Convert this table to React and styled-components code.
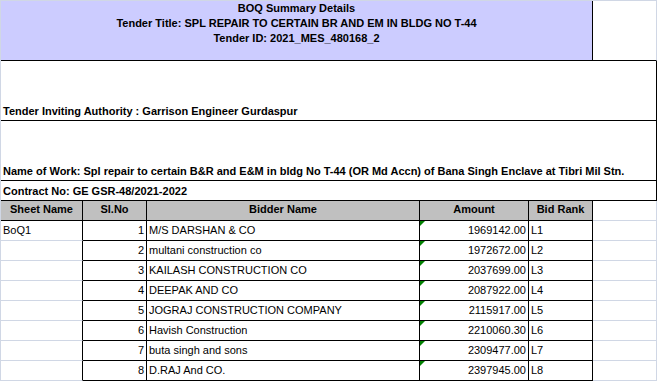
import React from "react";
import styled, { createGlobalStyle, css } from "styled-components";

const GRID = "#d0d7e5";
const BLACK = "#000";

const Global = createGlobalStyle`
  html, body { margin: 0; padding: 0; background: #fff; }
  body { font-family: "Liberation Sans", Arial, sans-serif; color: #000; }
`;

const Sheet = styled.div`
  display: grid;
  grid-template-columns: 82px 64px 273px 109px 64px 64px;
  grid-template-rows: 60px 60px 60px 20px 20px repeat(8, 20px);
  width: 657px;
  box-sizing: border-box;
  border-left: 1px solid ${GRID};
  border-top: 1px solid ${GRID};
`;

const Cell = styled.div`
  box-sizing: border-box;
  position: relative;
  display: flex;
  align-items: flex-end;
  overflow: hidden;
  white-space: nowrap;
  font-size: 11px;
  line-height: 13px;
  padding: 0 2px 2px;
  border-right: 1px solid ${(p) => (p.$rb === "black" ? BLACK : GRID)};
  border-bottom: 1px solid ${(p) => (p.$bb === "black" ? BLACK : GRID)};
  background: ${(p) => p.$bg || "#fff"};
  justify-content: ${(p) =>
    p.$align === "right" ? "flex-end" : p.$align === "center" ? "center" : "flex-start"};
  ${(p) => p.$span && css`grid-column: span ${p.$span};`}
  ${(p) => p.$bold && css`font-weight: bold;`}
`;

const TitleCell = styled(Cell)`
  flex-direction: column;
  align-items: center;
  justify-content: flex-start;
  padding: 0;
  font-weight: bold;
  line-height: 15px;
`;

const InfoCell = styled(Cell)`
  font-weight: bold;
  padding-bottom: 2px;
`;

const HeaderCell = styled(Cell)`
  font-weight: bold;
  justify-content: center;
  align-items: center;
  padding-bottom: 2px;
`;

const DataCell = styled(Cell)`
  align-items: center;
  padding-bottom: 1px;
  ${(p) =>
    p.$flag &&
    css`
      &::before {
        content: "";
        position: absolute;
        top: 0;
        left: 0;
        width: 0;
        height: 0;
        border-top: 5px solid #008000;
        border-right: 5px solid transparent;
      }
    `}
`;

const bidders = [
  ["1", "M/S DARSHAN & CO", "1969142.00", "L1"],
  ["2", "multani construction co", "1972672.00", "L2"],
  ["3", "KAILASH CONSTRUCTION CO", "2037699.00", "L3"],
  ["4", "DEEPAK AND CO", "2087922.00", "L4"],
  ["5", "JOGRAJ CONSTRUCTION COMPANY", "2115917.00", "L5"],
  ["6", "Havish Construction", "2210060.30", "L6"],
  ["7", "buta singh and sons", "2309477.00", "L7"],
  ["8", "D.RAJ And CO.", "2397945.00", "L8"],
];

export default function App() {
  return (
    <>
      <Global />
      <Sheet>
        <TitleCell $span={5} $bg="#ccccff" $rb="black" $bb="black">
          <span>BOQ Summary Details</span>
          <span>Tender Title: SPL REPAIR TO CERTAIN BR AND EM IN BLDG NO T-44</span>
          <span>Tender ID: 2021_MES_480168_2</span>
        </TitleCell>
        <Cell $bb="black" />

        <InfoCell $span={6} $rb="black" $bb="black">
          Tender Inviting Authority : Garrison Engineer Gurdaspur
        </InfoCell>
        <InfoCell $span={6} $rb="black" $bb="black">
          Name of Work: Spl repair to certain B&amp;R and E&amp;M in bldg No T-44 (OR Md Accn) of Bana Singh Enclave at Tibri Mil Stn.
        </InfoCell>
        <InfoCell $span={6} $rb="black" $bb="black">
          Contract No: GE GSR-48/2021-2022
        </InfoCell>

        <HeaderCell $bg="#c0c0c0" $rb="black" $bb="black">Sheet Name</HeaderCell>
        <HeaderCell $bg="#c0c0c0" $rb="black" $bb="black">Sl.No</HeaderCell>
        <HeaderCell $bg="#c0c0c0" $rb="black" $bb="black">Bidder Name</HeaderCell>
        <HeaderCell $bg="#c0c0c0" $rb="black" $bb="black">Amount</HeaderCell>
        <HeaderCell $bg="#c0c0c0" $rb="black" $bb="black">Bid Rank</HeaderCell>
        <Cell />

        {bidders.map(([no, name, amount, rank], i) => (
          <React.Fragment key={no}>
            <DataCell $rb="black">{i === 0 ? "BoQ1" : ""}</DataCell>
            <DataCell $rb="black" $bb="black" $align="right">{no}</DataCell>
            <DataCell $rb="black" $bb="black">{name}</DataCell>
            <DataCell $rb="black" $bb="black" $align="right" $flag>{amount}</DataCell>
            <DataCell $rb="black" $bb="black">{rank}</DataCell>
            <DataCell />
          </React.Fragment>
        ))}
      </Sheet>
    </>
  );
}
